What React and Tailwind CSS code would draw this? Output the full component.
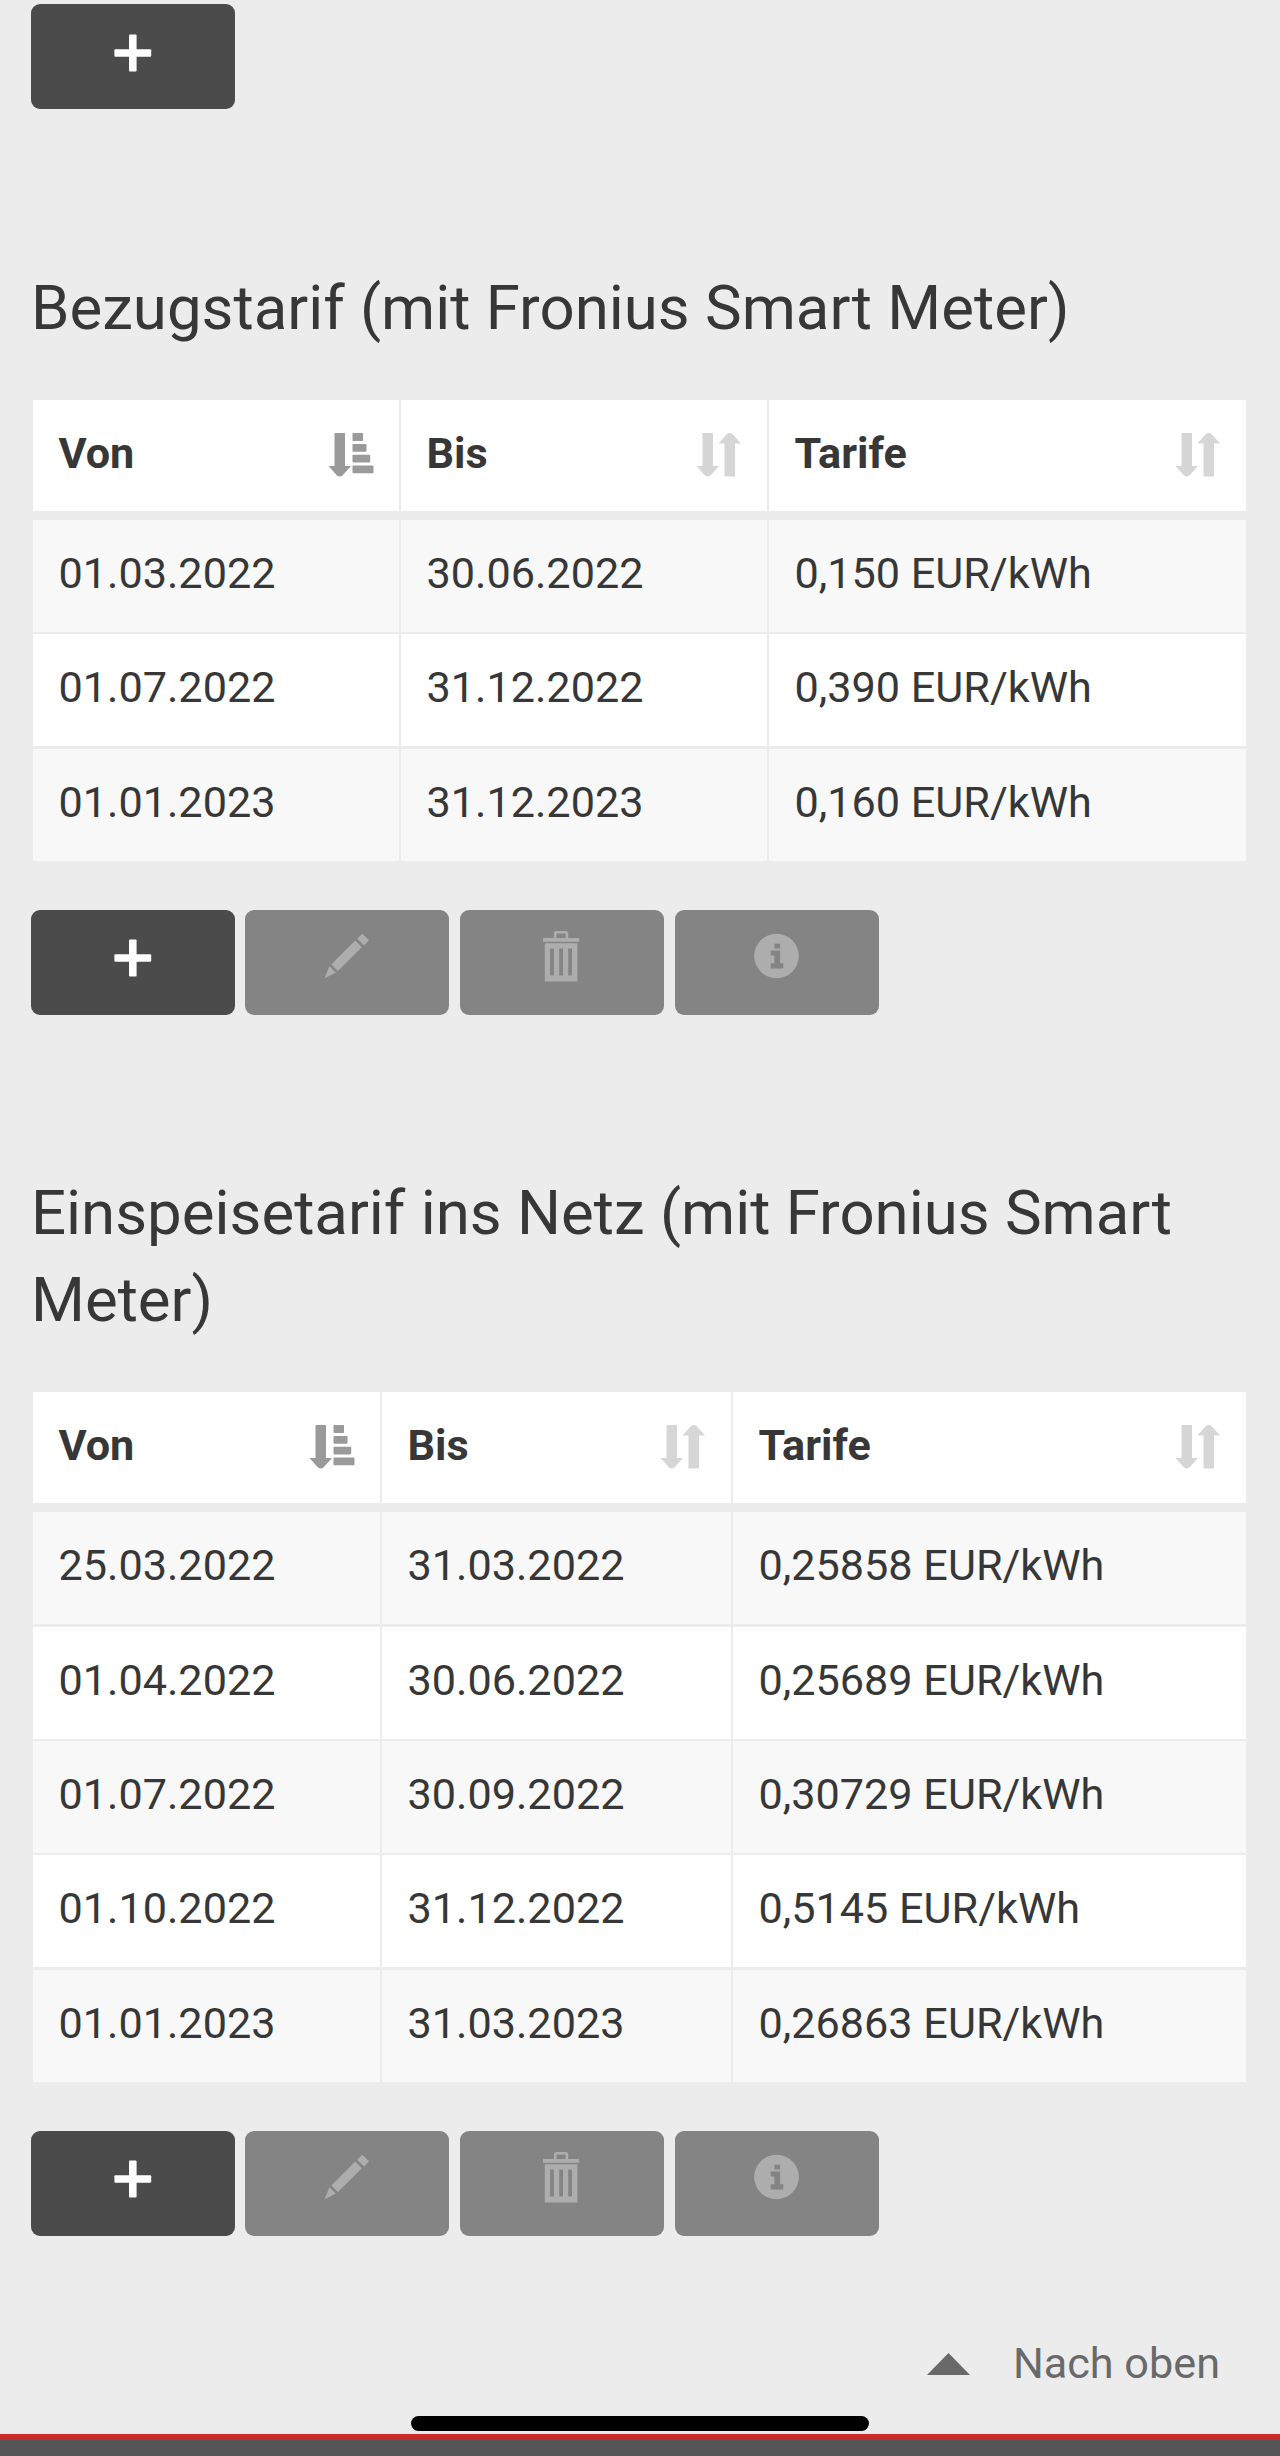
const purchase = {
  title: 'Bezugstarif (mit Fronius Smart Meter)',
  columns: 'grid-cols-[366px_366px_1fr]',
  rows: [
    ['01.03.2022', '30.06.2022', '0,150 EUR/kWh'],
    ['01.07.2022', '31.12.2022', '0,390 EUR/kWh'],
    ['01.01.2023', '31.12.2023', '0,160 EUR/kWh'],
  ],
};

const feedIn = {
  title: 'Einspeisetarif ins Netz (mit Fronius Smart Meter)',
  columns: 'grid-cols-[347px_349px_1fr]',
  rows: [
    ['25.03.2022', '31.03.2022', '0,25858 EUR/kWh'],
    ['01.04.2022', '30.06.2022', '0,25689 EUR/kWh'],
    ['01.07.2022', '30.09.2022', '0,30729 EUR/kWh'],
    ['01.10.2022', '31.12.2022', '0,5145 EUR/kWh'],
    ['01.01.2023', '31.03.2023', '0,26863 EUR/kWh'],
  ],
};

function SortedIcon() {
  return (
    <svg width="46" height="44" viewBox="0 0 46 44" fill="#9a9a9a">
      <path d="M6.5 0.5Q6.5 0 7 0H16.5Q17 0 17 0.5V33H23L14.5 42.5Q11.8 44.5 9 42.5L0.5 33H6.5Z" />
      <rect x="24.5" y="0" width="10.5" height="8" rx="0.8" />
      <rect x="24.5" y="11" width="14" height="7.7" rx="0.8" />
      <rect x="24.5" y="21.7" width="17.7" height="7.7" rx="0.8" />
      <rect x="24.5" y="32.6" width="21" height="7.7" rx="0.8" />
    </svg>
  );
}

function SortIcon() {
  return (
    <svg width="46" height="44" viewBox="0 0 46 44" fill="#d6d6d6">
      <path d="M6.5 0.5Q6.5 0 7 0H16.5Q17 0 17 0.5V33H23L14.5 42.5Q11.8 44.5 9 42.5L0.5 33H6.5Z" />
      <path d="M28.5 43Q28.5 43.5 29 43.5H38.5Q39 43.5 39 43V10.5H45L36.5 1Q33.8 -1 31 1L22.5 10.5H28.5Z" />
    </svg>
  );
}

function PlusIcon() {
  return (
    <svg width="56" height="56" viewBox="0 0 56 56" fill="#ffffff">
      <rect x="9.4" y="26.2" width="36.8" height="7.6" rx="1" />
      <rect x="24" y="11.6" width="7.6" height="36.8" rx="1" />
    </svg>
  );
}

function PencilIcon() {
  return (
    <svg width="56" height="56" viewBox="0 0 56 56" fill="#adadae">
      <path d="M5.5 50.2L10.4 38.3L16.8 44.7Z" />
      <path d="M12.3 36.4L36.2 12.6L42.8 19.2L18.9 43Z" />
      <path d="M38.2 10.7L42.5 6.4Q43.3 5.6 44.1 6.4L49.3 11.6Q50.1 12.4 49.3 13.2L45 17.4Z" />
    </svg>
  );
}

function TrashIcon() {
  return (
    <svg width="56" height="56" viewBox="0 0 56 56" fill="#adadae">
      <path d="M21.2 11V5.5Q21.2 4.2 22.5 4.2H31.6Q32.9 4.2 32.9 5.5V11" fill="none" stroke="#adadae" strokeWidth="2.6" />
      <rect x="9" y="10" width="36.2" height="3.8" />
      <path
        fillRule="evenodd"
        d="M10.8 15.2H43.4V53.5H10.8ZM16.1 20.5V47.6H19.9V20.5ZM25.2 20.5V47.6H29V20.5ZM34.2 20.5V47.6H38V20.5Z"
      />
    </svg>
  );
}

function InfoIcon() {
  return (
    <svg width="56" height="56" viewBox="0 0 56 56">
      <circle cx="27.5" cy="28" r="22.3" fill="#adadae" />
      <path
        fill="#848485"
        d="M25.4 15.7H31.1V20.4H25.4ZM21.7 22.5H31.1V35.3H34.3V40.5H21.7V35.3H25.4V27.5H21.7Z"
      />
    </svg>
  );
}

function ActionButton({ label, disabled, children }) {
  return (
    <button
      aria-label={label}
      disabled={disabled}
      className={`flex h-[105px] w-[204px] items-center justify-center rounded-[9px] pb-[12px] ${
        disabled ? 'bg-[#848485]' : 'bg-[#4b4b4c]'
      }`}
    >
      {children}
    </button>
  );
}

function Toolbar() {
  return (
    <div className="ml-[30.7px] flex gap-[10.8px]">
      <ActionButton label="Hinzufügen"><PlusIcon /></ActionButton>
      <ActionButton label="Bearbeiten" disabled><PencilIcon /></ActionButton>
      <ActionButton label="Löschen" disabled><TrashIcon /></ActionButton>
      <ActionButton label="Info" disabled><InfoIcon /></ActionButton>
    </div>
  );
}

function TariffSection({ tariff }) {
  return (
    <section>
      <h2 className="mx-[31px] mb-[48px] pt-[1px] text-[61.75px] leading-[86.7px]">{tariff.title}</h2>

      <div className="mr-[34px] mb-[49.2px] ml-[33px] text-[43.2px]">
        <div className={`mb-[8.8px] grid gap-x-[2px] font-bold ${tariff.columns}`}>
          {['Von', 'Bis', 'Tarife'].map((name, i) => (
            <div key={name} className="flex h-[111.5px] items-center justify-between bg-white pr-[25px] pl-[25.5px]">
              <span className="pb-[3px]">{name}</span>
              <span className="pb-[1px]">{i === 0 ? <SortedIcon /> : <SortIcon />}</span>
            </div>
          ))}
        </div>
        <div className="flex flex-col gap-[2.4px]">
          {tariff.rows.map((row, i) => (
            <div key={row[0]} className={`grid gap-x-[2px] ${tariff.columns}`}>
              {row.map((cell) => (
                <div
                  key={cell}
                  className={`flex h-[112px] items-center pb-[3px] pl-[25.5px] ${i % 2 === 0 ? 'bg-[#f8f8f8]' : 'bg-white'}`}
                >
                  {cell}
                </div>
              ))}
            </div>
          ))}
        </div>
      </div>

      <Toolbar />
    </section>
  );
}

export default function App() {
  return (
    <div className="relative flex h-[2456px] w-[1280px] flex-col overflow-hidden bg-[#ececec] pt-[4px] font-['Roboto',sans-serif] text-[#373737]">
      <div className="mb-[155px] ml-[30.7px]">
        <ActionButton label="Hinzufügen"><PlusIcon /></ActionButton>
      </div>

      <div className="flex flex-col gap-[154.5px]">
        <TariffSection tariff={purchase} />
        <TariffSection tariff={feedIn} />
      </div>

      <a className="mt-[102px] mr-[60px] flex items-center gap-[43px] self-end text-[43.2px] leading-[52px] text-[#69696a]">
        <svg width="43" height="22" viewBox="0 0 43 22" fill="currentColor">
          <path d="M21.5 0L43 22H0Z" />
        </svg>
        Nach oben
      </a>

      <footer className="mt-auto h-[22px] border-t-[6px] border-[#c92c28] bg-[#565658]" />

      {/* home indicator */}
      <div className="absolute bottom-[25px] left-[411px] h-[15.5px] w-[457.5px] rounded-full bg-black" />
    </div>
  );
}
